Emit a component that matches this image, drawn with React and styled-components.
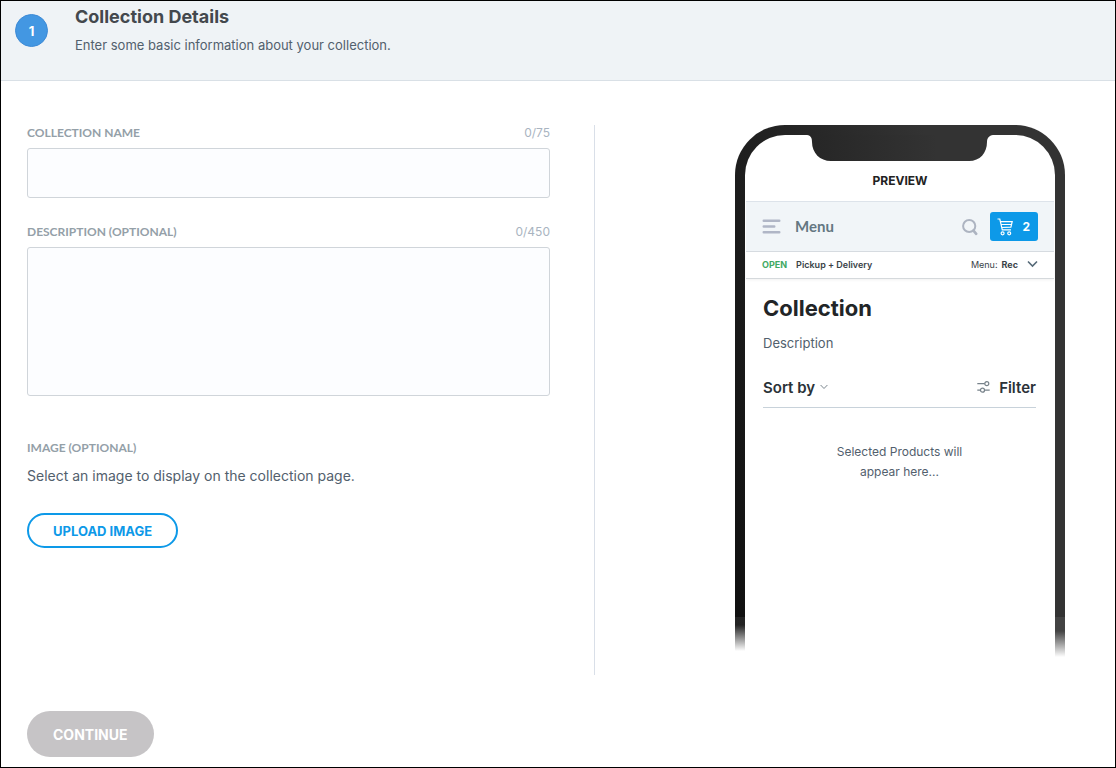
import { useState } from "react";
import styled, { createGlobalStyle } from "styled-components";

/* ======================
   GLOBAL
====================== */

const GlobalStyle = createGlobalStyle`
  *, *::before, *::after {
    box-sizing: border-box;
  }

  body {
    margin: 0;
    background: #fff;
    color: #52606d;
    font-family: Inter, "Liberation Sans", sans-serif;
    font-variant-ligatures: none;
  }

  h1, h2, h3, p {
    margin: 0;
  }

  button, input, textarea {
    font-family: inherit;
  }
`;

const lato = `Lato, "Open Sans", sans-serif`;

/* ======================
   PAGE
====================== */

const Page = styled.main`
  display: flex;
  flex-direction: column;
  min-height: 100vh;
  border: 1px solid #000;
`;

const Header = styled.header`
  display: flex;
  gap: 27px;
  padding: 4px 14px 25px;
  background: #eff3f6;
  border-bottom: 1px solid #d9e0e6;
`;

const StepBadge = styled.span`
  display: flex;
  align-items: center;
  justify-content: center;
  width: 33px;
  height: 33px;
  margin-top: 9px;
  border: 1px solid #3d8ad6;
  border-radius: 50%;
  background: #4397e2;
  color: #fff;
  font-size: 13px;
  font-weight: 700;
`;

const Title = styled.h1`
  color: #43484d;
  font-size: 18px;
  font-weight: 700;
  line-height: 24px;
`;

const Subtitle = styled.p`
  margin-top: 6px;
  font-size: 13px;
  line-height: 20px;
`;

const Body = styled.div`
  display: grid;
  grid-template-columns: 594fr 520fr;
  flex: 1;
  padding-top: 44px;
`;

const Footer = styled.footer`
  padding: 36px 26px 10px;
`;

/* ======================
   FORM
====================== */

const Form = styled.form`
  padding: 0 44px 0 26px;
  border-right: 1px solid #d9dfe8;
`;

const Field = styled.div`
  margin-bottom: ${({ $last }) => ($last ? "44px" : "26px")};
`;

const LabelRow = styled.div`
  display: flex;
  justify-content: space-between;
  height: 16px;
  margin-bottom: 7px;
  line-height: 16px;
`;

const Label = styled.label`
  color: #94a0a8;
  font-family: ${lato};
  font-size: 12px;
  font-weight: 700;
  line-height: 16px;
  text-transform: uppercase;
`;

const Counter = styled.span`
  color: #a9b4c1;
  font-size: 12px;
`;

const Input = styled.input`
  display: block;
  width: 100%;
  height: 50px;
  padding: 0 14px;
  border: 1px solid #d0d5da;
  border-radius: 3px;
  background: #fcfdff;
  font-size: 14px;

  &:focus {
    outline: none;
    border-color: #0d99e8;
  }
`;

const TextArea = styled(Input)`
  height: 149px;
  padding: 14px;
  resize: none;
`;

const Hint = styled.p`
  margin: 10px 0 27px;
  font-size: 14px;
  line-height: 20px;
`;

const UploadButton = styled.button`
  height: 35px;
  padding: 0 24px;
  border: 2px solid #0d99e8;
  border-radius: 18px;
  background: #fff;
  color: #0d99e8;
  font-size: 13px;
  font-weight: 700;
  text-transform: uppercase;
  cursor: pointer;
`;

const ContinueButton = styled.button`
  display: block;
  height: 46px;
  padding: 0 26px;
  border: none;
  border-radius: 23px;
  background: #c6c4c6;
  color: #fff;
  font-size: 14px;
  font-weight: 700;
  text-transform: uppercase;
`;

/* ======================
   PHONE PREVIEW
====================== */

const PreviewColumn = styled.aside`
  display: flex;
  align-items: flex-start;
  justify-content: flex-end;
  padding-right: 50px;
`;

const Phone = styled.div`
  position: relative;
  width: 330px;
  height: 532px;
  padding: 10px 10px 0;
  border-radius: 50px 50px 0 0;
  background: linear-gradient(75deg, #0f0f0f, #333 70%);
`;

/* fades the side rails out at the bottom of the frame */
const RailFade = styled.span`
  position: absolute;
  bottom: 0;
  ${({ $side }) => $side}: 0;
  width: 10px;
  height: 40px;
  background: linear-gradient(
    rgba(255, 255, 255, 0.08) 0,
    rgba(255, 255, 255, 0.08) ${({ $side }) => ($side === "left" ? "8px" : "14px")},
    #fff ${({ $side }) => ($side === "left" ? "34px" : "40px")}
  );
`;

const Screen = styled.div`
  height: 100%;
  border-radius: 40px 40px 0 0;
  background: #fff;
`;

const Notch = styled.svg`
  display: block;
  width: 186px;
  height: 26px;
  margin: 0 auto;
`;

const PreviewTitle = styled.h2`
  padding: 12px 0;
  color: #222;
  font-size: 12px;
  font-weight: 700;
  line-height: 16px;
  text-align: center;
`;

const MenuBar = styled.div`
  display: flex;
  align-items: center;
  height: 51px;
  margin: 0 1px;
  padding: 0 16px;
  border-top: 1px solid #dde3ea;
  border-bottom: 1px solid #d8dde2;
  background: #f1f5f8;
`;

const MenuName = styled.span`
  flex: 1;
  margin-left: 14px;
  padding-bottom: 2px;
  color: #647782;
  font-family: ${lato};
  font-size: 15px;
  font-weight: 700;
  line-height: 20px;
`;

const CartButton = styled.button`
  display: flex;
  align-items: center;
  justify-content: space-between;
  width: 48px;
  height: 29px;
  margin-left: 12px;
  padding: 0 8px 0 7px;
  border: none;
  border-radius: 3px;
  background: #0d99e8;
  color: #fff;
  font-size: 12px;
  font-weight: 700;
`;

const StatusBar = styled.div`
  display: flex;
  align-items: center;
  height: 27px;
  margin: 0 1px;
  padding: 0 16px 2px;
  border-bottom: 1px solid #d5d9dc;
  box-shadow: 0 1px 3px rgba(0, 0, 0, 0.06);
  color: #3a4247;
  font-size: 9px;
  font-weight: 600;
`;

const Open = styled.span`
  margin-right: 9px;
  color: #41a963;
  font-weight: 700;
`;

const StatusMenu = styled.button`
  display: flex;
  align-items: center;
  gap: 4px;
  margin-left: auto;
  padding: 0;
  border: none;
  background: none;
  color: #3a4247;
  font-size: 9px;
`;

const StatusChevron = styled.svg`
  margin-left: 5px;
`;

const Collection = styled.section`
  padding: 15px 19px 0 18px;
`;

const CollectionName = styled.h3`
  color: #222527;
  font-size: 22px;
  font-weight: 700;
  line-height: 28px;
`;

const CollectionText = styled.p`
  margin-top: 11px;
  font-size: 13px;
  line-height: 20px;
`;

const Toolbar = styled.div`
  display: flex;
  justify-content: space-between;
  margin-top: 21px;
  padding-bottom: 7px;
  border-bottom: 1px solid #c8d2da;
`;

const ToolbarButton = styled.button`
  display: flex;
  align-items: center;
  gap: ${({ $gap }) => $gap};
  height: 26px;
  padding: 0;
  border: none;
  background: none;
  color: #2b3238;
  font-size: 15px;
  font-weight: 600;
`;

const Empty = styled.p`
  width: 160px;
  margin: 34px auto 0;
  font-size: 12px;
  line-height: 20px;
  text-align: center;
`;

const CartIcon = () => (
  <svg width="16" height="18" viewBox="0 0 16 18" fill="none" stroke="#fff" strokeWidth="1.2" aria-hidden="true">
    <path d="M0.500 1h2.300l2.500 10.800h8.700M3.500 3.700h11.700l-1.300 5.500-9.100.3M4.200 6.500h10.200" />
    <circle cx="5.600" cy="15.300" r="1.500" />
    <circle cx="12.200" cy="15.300" r="1.500" />
  </svg>
);

const MenuIcon = () => (
  <svg width="19" height="16" viewBox="0 0 19 16" stroke="#b0b6c6" strokeWidth="2.4" strokeLinecap="round" aria-hidden="true">
    <path d="M1.700 1.700h15.600M1.700 7.500h10.600M1.700 13.300h15.600" />
  </svg>
);

const SearchIcon = () => (
  <svg width="16" height="18" viewBox="0 0 16 18" fill="none" stroke="#adb4c1" strokeLinecap="round" aria-hidden="true">
    <circle cx="7.200" cy="8" r="6.100" strokeWidth="2" />
    <path d="M11.500 12.600l2.700 3.200" strokeWidth="2.6" />
  </svg>
);

const FilterIcon = () => (
  <svg width="13" height="12" viewBox="0 0 13 12" fill="none" stroke="#77828a" strokeWidth="1.2" aria-hidden="true">
    <path d="M0.300 2.700h7.400M0.300 9.200h3.200M7.500 9.200h5.200" />
    <circle cx="9.800" cy="2.700" r="2" />
    <circle cx="5.500" cy="9.200" r="2" />
  </svg>
);

/* ======================
   COMPONENT
====================== */

const App = () => {
  const [name, setName] = useState("");
  const [description, setDescription] = useState("");

  return (
    <Page>
      <GlobalStyle />
      <Header>
        <StepBadge>1</StepBadge>
        <div>
          <Title>Collection Details</Title>
          <Subtitle>Enter some basic information about your collection.</Subtitle>
        </div>
      </Header>

      <Body>
        <Form id="collection-form" onSubmit={(e) => e.preventDefault()}>
          <Field>
            <LabelRow>
              <Label htmlFor="name">Collection Name</Label>
              <Counter>{name.length}/75</Counter>
            </LabelRow>
            <Input
              id="name"
              maxLength={75}
              value={name}
              onChange={(e) => setName(e.target.value)}
            />
          </Field>

          <Field $last>
            <LabelRow>
              <Label htmlFor="description">Description (optional)</Label>
              <Counter>{description.length}/450</Counter>
            </LabelRow>
            <TextArea
              as="textarea"
              id="description"
              maxLength={450}
              value={description}
              onChange={(e) => setDescription(e.target.value)}
            />
          </Field>

          <LabelRow>
            <Label as="span" id="image-label">Image (optional)</Label>
          </LabelRow>
          <Hint>Select an image to display on the collection page.</Hint>
          <UploadButton type="button" aria-describedby="image-label">
            Upload Image
          </UploadButton>
        </Form>

        <PreviewColumn>
          <Phone>
            <Screen>
              <Notch viewBox="0 0 186 26" aria-hidden="true">
                <defs>
                  <linearGradient id="notch">
                    <stop offset="0" stopColor="#262626" />
                    <stop offset="0.7" stopColor="#333" />
                  </linearGradient>
                </defs>
                <path
                  fill="url(#notch)"
                  d="M0 0h186c-4 .5-6 3-6 7 0 11-7 19-18 19H24C13 26 5 18 5 7c0-4-1-6.500-5-7z"
                />
              </Notch>
              <PreviewTitle>PREVIEW</PreviewTitle>
              <MenuBar>
                <MenuIcon />
                <MenuName>Menu</MenuName>
                <SearchIcon />
                <CartButton type="button" aria-label="Cart, 2 items">
                  <CartIcon />
                  <span>2</span>
                </CartButton>
              </MenuBar>
              <StatusBar>
                <Open>OPEN</Open>
                <span>Pickup + Delivery</span>
                <StatusMenu type="button">
                  <span>Menu:</span>
                  <strong>Rec</strong>
                  <StatusChevron width="11" height="8" viewBox="0 0 11 8" fill="none" stroke="#566a78" strokeWidth="1.6" aria-hidden="true">
                    <path d="M1 1.500l4.500 4.500L10 1.500" />
                  </StatusChevron>
                </StatusMenu>
              </StatusBar>
              <Collection>
                <CollectionName>{name || "Collection"}</CollectionName>
                <CollectionText>{description || "Description"}</CollectionText>
                <Toolbar>
                  <ToolbarButton type="button" $gap="5px">
                    Sort by
                    <svg width="8" height="6" viewBox="0 0 8 6" fill="none" stroke="#7b868e" aria-hidden="true">
                      <path d="M0.600 1l3.400 3.500L7.400 1" />
                    </svg>
                  </ToolbarButton>
                  <ToolbarButton type="button" $gap="9px">
                    <FilterIcon />
                    Filter
                  </ToolbarButton>
                </Toolbar>
                <Empty>Selected Products will appear here...</Empty>
              </Collection>
            </Screen>
            <RailFade $side="left" />
            <RailFade $side="right" />
          </Phone>
        </PreviewColumn>
      </Body>

      <Footer>
        <ContinueButton type="submit" form="collection-form" disabled={!name}>
          Continue
        </ContinueButton>
      </Footer>
    </Page>
  );
};

export default App;
